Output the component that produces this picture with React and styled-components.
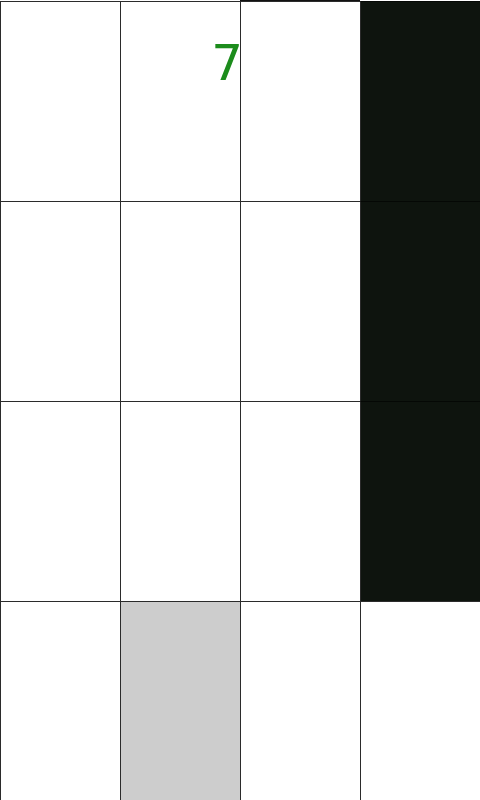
import React from "react";
import styled, { createGlobalStyle } from "styled-components";

const GlobalStyle = createGlobalStyle`
  html, body {
    margin: 0;
    padding: 0;
    background: #ffffff;
  }
`;

const Screen = styled.div`
  position: relative;
  width: 480px;
  height: 800px;
  overflow: hidden;
  padding-top: 1px;
  box-sizing: border-box;
`;

const Board = styled.div`
  display: grid;
  grid-template-columns: repeat(4, 120px);
  grid-template-rows: repeat(4, 200px);
`;

const tileColors = {
  white: "#ffffff",
  black: "#0e140e",
  pressed: "#cdcdcd",
};

const Tile = styled.div`
  position: relative;
  z-index: ${(p) => (p.$front ? 2 : 0)};
  box-sizing: border-box;
  background: ${(p) => tileColors[p.$kind]};
  border-left: 1px solid #2b2b2b;
  border-top: 1px solid ${(p) => (p.$kind === "black" ? "#050805" : "#2b2b2b")};
  box-shadow: ${(p) => (p.$front ? "0 -1px 0 #111" : "none")};
`;

const Score = styled.div`
  position: absolute;
  top: 38px;
  right: 237px;
  font-family: "DejaVu Sans", "Liberation Sans", sans-serif;
  font-size: 50px;
  line-height: 50px;
  color: #1c8c1c;
  z-index: 1;
`;

const rows = [
  ["white", "white", "white", "black"],
  ["white", "white", "white", "black"],
  ["white", "white", "white", "black"],
  ["white", "pressed", "white", "white"],
];

export default function App() {
  return (
    <>
      <GlobalStyle />
      <Screen>
        <Board>
          {rows.map((row, r) =>
            row.map((kind, c) => (
              <Tile key={`${r}-${c}`} $kind={kind} $front={r === 0 && c === 2} />
            ))
          )}
        </Board>
        <Score>7</Score>
      </Screen>
    </>
  );
}
